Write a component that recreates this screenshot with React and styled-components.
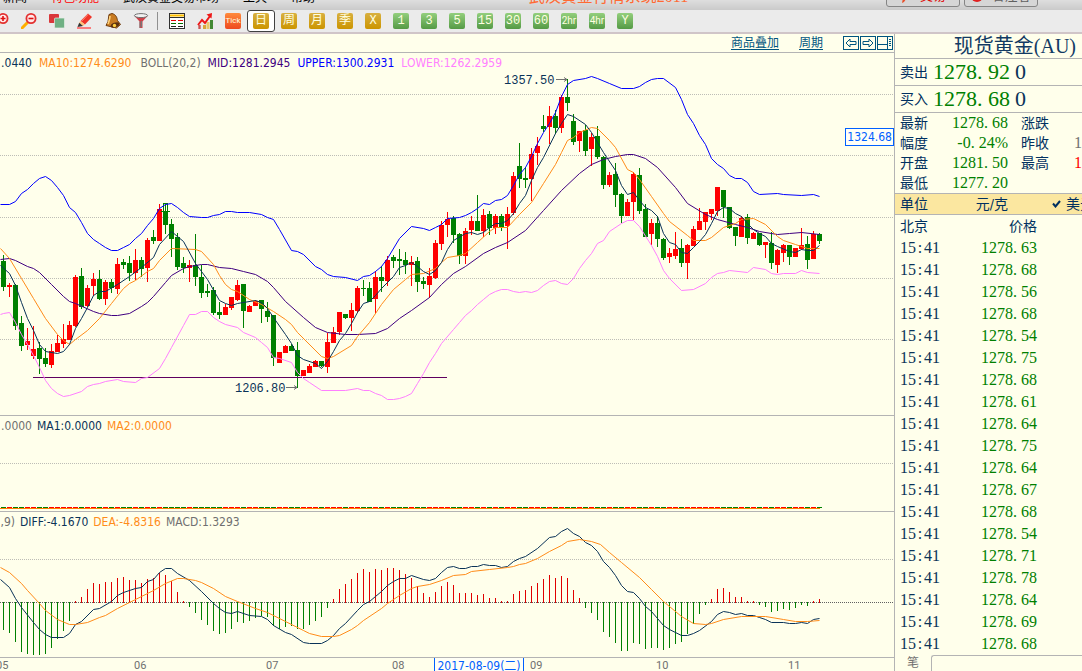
import styled, { createGlobalStyle, css } from "styled-components";

const GlobalStyle = createGlobalStyle`
  * {
    box-sizing: border-box;
  }
  body {
    margin: 0;
    overflow: hidden;
    background: #ffffeb;
    font-family: "DejaVu Sans Condensed", "Noto Sans CJK SC", sans-serif;
    font-size: 12px;
    color: #003060;
  }
`;

const colors = {
  up: "#ff0000",
  down: "#008000",
  navy: "#0a3358",
  orange: "#ff8c1a",
  gray: "#707070",
  purple: "#400080",
  blue: "#0000ff",
  pink: "#ff80ff",
  line: "#b4b4b4",
  grid: "#bdbdb6",
};

const serif = css`
  font-family: "Liberation Serif", "Noto Sans CJK SC", serif;
`;

/* ---------- data ---------- */

const STEP = 6;

// direction, high, top of body, bottom of body, low
const candles = `
G 255 261 287 291|R 283 285 287 297|G 284 285 326 330|G 316 323 346 351|R 328 341 345 350
R 326 349 356 359|G 342 348 359 374|G 348 358 364 367|R 344 351 365 368|R 335 343 352 352
R 324 339 344 348|R 321 325 340 340|R 275 277 326 327|G 268 276 307 309|R 285 288 306 307
R 273 279 286 296|G 270 279 299 300|R 280 282 299 305|G 279 282 288 293|R 258 264 289 294
G 259 262 265 269|G 256 263 273 281|R 249 260 273 280|G 257 260 269 277|R 238 240 268 282
G 230 237 241 244|R 204 209 241 241|G 204 211 225 234|G 219 224 239 257|G 233 237 267 270
G 257 263 268 273|R 260 265 268 282|G 234 265 277 286|G 265 277 293 298|G 284 291 293 297
G 287 290 313 315|G 302 312 315 319|R 304 307 315 315|R 297 297 308 310|R 280 285 300 301
G 284 284 311 328|R 305 306 312 312|R 300 301 306 306|G 300 300 309 323|G 302 311 317 322
G 315 315 358 366|R 352 352 363 363|R 345 346 353 353|G 344 346 351 351|G 342 350 376 388
R 370 370 376 376|R 364 366 373 373|R 360 361 367 367|G 361 361 366 367|R 333 342 367 373
R 327 332 343 343|R 312 312 332 335|G 314 314 318 319|R 303 310 318 331|R 286 288 311 313
G 280 288 289 296|G 282 288 302 302|R 271 277 299 314|G 266 277 281 292|R 256 260 281 286
G 255 257 261 268|G 249 259 261 275|G 252 260 265 274|R 256 262 265 286|G 257 261 282 292
G 277 281 284 289|R 268 276 285 298|R 240 243 278 279|R 221 225 244 250|R 212 219 225 237
G 216 218 235 243|G 233 234 256 264|R 228 231 256 264|R 216 221 230 235|G 195 221 231 231
R 209 215 231 237|G 211 214 228 235|R 214 216 228 234|G 214 216 228 231|R 207 214 226 249
R 172 176 213 215|G 143 166 179 188|G 167 178 180 188|R 148 154 179 201|R 137 146 153 165
G 115 126 129 132|R 106 116 127 144|G 110 116 128 134|R 95 97 128 133|G 79 97 103 111
G 114 121 142 145|R 131 131 141 152|G 125 130 151 156|R 133 137 149 166|G 126 136 157 159
G 156 157 185 189|R 172 175 185 187|G 163 174 195 207|G 193 194 216 223|R 199 202 216 216
R 172 174 202 220|G 168 175 211 214|G 204 209 237 237|R 219 223 234 245|G 216 223 239 247
G 238 239 258 260|R 248 253 257 263|R 232 249 256 259|G 239 248 263 267|R 244 245 263 279
R 226 229 246 246|R 208 221 230 230|R 212 212 222 230|R 209 209 214 220|R 187 187 211 216
G 190 190 207 218|G 207 207 228 229|G 227 227 236 246|R 216 218 237 237|G 214 217 238 244
R 232 233 239 239|G 233 233 245 246|R 242 242 245 258|G 232 243 263 269|R 249 250 265 273
R 244 245 253 262|G 245 245 257 265|R 248 248 257 257|R 228 245 249 250|G 236 244 260 269
R 231 234 259 259|G 233 234 241 244`
  .trim()
  .split(/[|\n]/)
  .map((row) => {
    const [dir, ...v] = row.split(" ");
    const [high, top, bottom, low] = v.map(Number);
    return { color: dir === "R" ? colors.up : colors.down, high, top, bottom, low };
  });

const upper =
  "0,204 9,204 15,201 21,193 27,189 33,183 39,178 45,176 51,180 57,187 63,195 69,207 75,212 81,222 87,233 93,239 99,243 105,247 111,250 117,250 123,247 129,244 135,238 141,233 147,225 153,218 159,208 165,204 171,203 177,207 183,212 189,216 201,217 207,217 213,215 219,214 225,211 231,211 237,212 249,212 261,214 267,217 273,219 279,229 291,250 297,251 303,254 315,266 321,269 327,274 333,276 345,277 357,280 363,276 369,275 375,271 381,266 387,258 399,238 411,226 423,228 429,230 435,227 441,224 447,218 459,217 465,215 471,212 477,208 483,203 489,204 495,200 501,199 507,195 513,185 519,174 525,167 531,156 537,143 543,132 549,123 555,112 561,96 567,84 573,80 585,78 591,76 597,78 609,83 621,88 633,88 639,86 645,82 651,79 657,78 663,78 675,87 681,99 687,114 693,123 699,135 705,144 711,158 717,164 723,168 729,175 735,178 741,178 747,182 753,191 759,194 777,193 783,194 801,195 813,194 819,196";
const lower =
  "0,314 3,313 9,312 15,322 21,334 27,344 33,355 39,367 45,380 51,388 57,393 63,396 69,395 81,391 87,386 93,384 99,383 105,381 117,379 123,381 135,382 141,378 147,377 159,368 165,358 171,347 183,325 189,314 195,314 201,311 207,311 213,317 219,321 225,324 237,327 243,332 255,337 261,342 267,347 273,357 279,358 291,362 297,372 303,378 309,382 321,390 345,390 357,388 363,390 369,390 375,393 381,395 387,399 393,399 399,398 405,396 411,393 417,383 423,373 429,362 435,353 441,343 453,329 459,322 465,315 471,310 477,304 483,299 489,294 495,291 501,289 507,289 513,291 519,292 525,291 531,292 537,290 543,285 549,281 555,280 561,283 567,284 573,278 579,268 585,260 591,253 597,243 603,240 609,231 621,223 627,220 633,220 639,226 651,245 657,256 663,270 669,278 681,290 693,289 705,283 711,277 717,273 723,272 729,270 747,272 753,267 765,269 771,273 777,274 783,273 795,273 801,270 807,272 819,273";
const mid =
  "0,259 9,258 15,260 27,266 33,268 39,272 51,284 63,296 69,301 75,303 93,311 99,313 111,315 117,315 129,313 141,306 147,302 153,296 165,282 171,275 183,268 189,266 201,264 207,264 219,267 231,268 243,271 255,274 267,281 273,287 285,301 303,317 315,327 327,332 345,334 357,334 375,333 387,328 399,318 411,310 429,297 441,284 453,273 465,266 483,253 495,247 507,242 525,230 543,210 561,190 579,173 591,164 603,159 615,156 627,154 633,154 645,158 657,167 675,187 687,203 705,214 717,219 735,224 747,227 759,231 777,234 789,233 801,232 819,234";
const ma10 =
  "0,248 9,258 21,278 33,298 45,318 57,334 63,340 69,344 75,339 87,330 99,318 111,303 123,288 129,283 135,280 147,271 153,268 159,260 171,248 195,249 201,251 213,264 219,275 225,284 231,289 237,291 249,299 261,304 273,311 285,319 291,324 297,332 321,356 327,358 333,356 351,345 357,336 369,322 381,304 393,289 405,279 411,274 423,273 435,268 441,262 447,257 459,255 465,253 477,242 489,231 495,227 507,227 519,214 531,202 543,183 555,164 561,152 567,140 573,137 579,132 591,127 597,128 609,140 615,147 627,169 633,172 639,179 651,196 663,213 669,221 687,235 693,240 705,240 711,237 723,227 735,223 741,219 753,218 765,224 777,236 783,240 795,244 807,248 819,248";
const ma5 =
  "0,265 9,273 15,285 21,302 27,318 33,330 39,344 45,351 57,353 63,351 69,344 75,328 81,318 87,307 93,295 99,291 105,291 117,284 129,276 141,267 153,257 159,244 171,231 183,241 195,263 207,279 219,300 225,303 231,305 237,303 255,300 261,302 267,308 273,317 285,334 291,343 297,355 303,359 315,363 321,368 327,361 333,351 339,340 345,333 351,323 357,312 363,303 369,301 375,295 381,288 393,276 399,267 405,265 411,262 417,266 423,271 429,274 435,270 441,262 447,249 453,240 465,233 471,232 477,234 483,232 489,227 495,223 501,223 507,220 513,213 519,203 525,195 531,180 537,167 543,157 555,133 561,123 567,114 573,116 585,124 591,132 597,142 603,152 615,170 621,185 627,194 633,192 639,200 645,207 651,210 657,216 663,233 669,242 675,244 681,252 687,253 693,247 699,241 705,234 711,223 717,211 723,207 729,208 735,213 741,216 747,223 753,229 759,233 765,236 771,243 777,246 789,251 795,252 801,249 807,250 813,250 819,245";
const diff =
  "0,579 9,587 15,598 21,607 33,622 39,629 45,634 51,637 63,637 69,633 75,624 81,621 93,609 99,608 111,601 117,595 123,592 135,588 141,587 147,581 153,579 159,572 165,568 171,568 177,573 189,580 201,591 213,603 219,608 225,612 231,613 237,611 249,615 261,616 267,619 273,625 285,632 291,634 303,642 309,643 321,643 327,640 333,635 339,628 345,623 357,610 363,604 369,601 375,596 381,591 387,585 393,581 399,578 405,578 411,575 423,579 429,580 435,578 441,572 447,567 453,566 459,568 465,568 471,566 477,566 483,564 489,565 495,565 501,567 507,566 513,561 519,558 525,556 537,548 549,537 555,536 561,531 567,528 573,533 579,536 585,542 591,545 597,551 603,561 609,567 615,575 621,585 627,591 633,592 639,598 645,606 651,611 663,625 669,629 681,635 687,635 693,633 699,630 711,621 717,614 723,611 729,612 735,614 741,613 747,615 753,615 759,617 765,619 771,622 783,622 789,623 795,623 801,622 807,623 813,619 819,618";
const dea =
  "0,567 9,572 21,583 27,590 39,603 45,610 57,619 69,624 75,624 87,622 99,617 105,615 117,608 129,602 141,596 153,590 165,583 177,578 183,578 195,580 201,582 213,588 225,596 237,601 255,608 267,612 285,621 303,630 309,633 321,636 333,636 339,635 351,629 357,625 363,620 381,608 387,603 393,599 399,595 411,588 417,586 429,584 441,580 453,575 465,574 471,571 489,569 507,567 513,566 519,564 525,563 537,558 549,551 561,545 567,541 579,539 591,541 600,544 609,552 621,562 639,577 651,589 663,601 681,616 693,623 705,624 711,623 723,619 741,616 765,616 783,619 795,621 807,621 819,620";

const ZERO = 602;
const macd = [
  629, 632, 641, 651, 653, 654, 654, 653, 647, 638, 630, 620, 601, 597, 589, 583, 584, 582, 582, 578, 577, 580, 580,
  583, 579, 578, 573, 575, 581, 592, 601, 606, 612, 619, 624, 630, 633, 632, 628, 621, 622, 620, 617, 615, 616, 625,
  628, 626, 625, 628, 628, 624, 620, 616, 607, 599, 589, 584, 579, 573, 569, 572, 569, 570, 568, 568, 570, 574, 578,
  586, 593, 597, 592, 586, 582, 585, 593, 593, 593, 595, 594, 598, 598, 601, 601, 594, 591, 590, 586, 583, 579, 575,
  578, 576, 578, 590, 598, 607, 612, 619, 631, 636, 642, 650, 650, 642, 643, 648, 647, 647, 649, 647, 643, 641, 633,
  623, 613, 604, 599, 589, 588, 592, 597, 597, 601, 601, 604, 606, 611, 610, 608, 609, 607, 604, 605, 601, 599,
];

const months = [
  ["05", -4],
  ["06", 134],
  ["07", 266],
  ["08", 392],
  ["09", 530],
  ["10", 656],
  ["11", 788],
];

const ticks = [
  "1278.63", "1278.68", "1278.56", "1278.68", "1278.54", "1278.75", "1278.68", "1278.61", "1278.64", "1278.75",
  "1278.64", "1278.67", "1278.68", "1278.54", "1278.71", "1278.78", "1278.64", "1278.69", "1278.68",
];

/* ---------- window chrome ---------- */

const Window = styled.div`
  height: 100vh;
  display: flex;
  flex-direction: column;
  overflow: hidden;
`;

const TitleBar = styled.header`
  height: 10px;
  flex: none;
  display: flex;
  align-items: flex-end;
  justify-content: space-between;
  padding: 0 44px 0 3px;
  overflow: hidden;
  background: linear-gradient(#dedede, #cacaca);
`;

const Menu = styled.nav`
  flex: none;
  display: flex;
  gap: 24px;
  padding-bottom: 4px;
`;

const MenuItem = styled.a`
  color: ${(props) => (props.$hot ? "#ff0000" : "#000000")};
  font-size: 12px;
  line-height: 16px;
  text-decoration: none;
  white-space: nowrap;
`;

const AppTitle = styled.span`
  flex: 1;
  padding: 0 0 3px 16px;
  color: #ff6a33;
  font-size: 16px;
  line-height: 20px;
  text-align: center;
  white-space: nowrap;
  ${serif}
`;

const TitleButtons = styled.div`
  display: flex;
  gap: 4px;
  padding-bottom: 3px;
`;

const TitleButton = styled.button`
  width: 74px;
  height: 22px;
  display: flex;
  align-items: center;
  justify-content: center;
  gap: 8px;
  padding: 0;
  border: 1px solid #858585;
  border-radius: 3px;
  background: #d6d6d6;
  color: ${(props) => props.$color};
  font-family: inherit;
  font-size: 13px;
  line-height: 16px;
`;

const ToolBar = styled.div`
  height: 24px;
  flex: none;
  display: flex;
  align-items: flex-start;
  border-bottom: 2px solid #d0c5c8;
  background: #ebebeb;
`;

const Tools = styled.div`
  display: flex;
  margin-left: -13px;
`;

const Tool = styled.button`
  width: 28px;
  height: 22px;
  display: flex;
  align-items: center;
  justify-content: center;
  padding: 0;
  border: 1px solid ${(props) => (props.$active ? "#404040" : "transparent")};
  border-radius: 3px;
  background: ${(props) => (props.$active ? "#ffffff" : "none")};
`;

const ToolDivider = styled.div`
  width: 6px;
  height: 18px;
  margin: 2px 0 0 2px;
  border-left: 1px solid #909090;
`;

const badgeColors = {
  gold: "linear-gradient(#d8b040, #cc9500)",
  green: "linear-gradient(#93cf7d, #559a45)",
  tick: "linear-gradient(#ff8a3c, #ee4a20)",
};

const Badge = styled.span`
  width: 16px;
  height: 16px;
  border-radius: 2px;
  background: ${(props) => badgeColors[props.$kind]};
  color: #ffffe0;
  font-family: ${(props) => (props.$size ? "Roboto" : '"Liberation Mono", "Noto Sans CJK SC"')}, sans-serif;
  font-size: ${(props) => props.$size || 12}px;
  line-height: 16px;
  text-align: center;
  overflow: hidden;
`;

/* ---------- left side: charts ---------- */

const Main = styled.main`
  flex: 1;
  min-height: 0;
  display: flex;
`;

const Charts = styled.section`
  flex: 1;
  min-width: 0;
  display: flex;
  flex-direction: column;
  border-right: 1px solid ${colors.line};
`;

const ChartHeader = styled.div`
  height: 19px;
  flex: none;
  display: flex;
  align-items: center;
  justify-content: flex-end;
  gap: 20px;
  padding-right: 1px;
  border-bottom: 1px solid ${colors.line};
`;

const HeaderLink = styled.a`
  color: #00557f;
  font-size: 12px;
  line-height: 16px;
  text-decoration: underline;
  text-underline-offset: 2px;
`;

const NavButtons = styled.div`
  display: flex;
  gap: 1px;
`;

const NavButton = styled.button`
  width: 16px;
  height: 14px;
  padding: 0;
  border: 1px solid #00557f;
  background: none;
  display: flex;
`;

const Panel = styled.div`
  position: relative;
  height: ${(props) => props.$height}px;
  flex: none;
  border-bottom: 1px solid ${colors.line};
`;

const Plot = styled.svg`
  display: block;
  width: 100%;
  height: 100%;
`;

const Legend = styled.div`
  position: absolute;
  top: 2px;
  left: 0;
  display: flex;
  gap: ${(props) => props.$gap || 5}px;
  line-height: 16px;
  white-space: nowrap;
`;

const LegendItem = styled.span`
  color: ${(props) => props.$color};
  ${(props) => props.$indent && "padding-left: 2px;"}
`;

// the first entry is scrolled out past the left edge
const LegendLead = styled(LegendItem)`
  width: ${(props) => props.$width}px;
  display: flex;
  justify-content: flex-end;
  overflow: hidden;
`;

const PriceTag = styled.div`
  position: absolute;
  top: 75px;
  right: 0;
  padding: 0 1px;
  border: 1px solid #0060ff;
  background: #fffff6;
  color: #0060ff;
  line-height: 16px;
`;

const Axis = styled.div`
  position: relative;
  flex: 1;
  overflow: hidden;
`;

const DateTag = styled.div`
  position: absolute;
  top: -1px;
  left: 434px;
  width: 90px;
  border: 1px solid #0060ff;
  background: #fffff6;
  color: #0060ff;
  line-height: 16px;
  text-align: center;
  white-space: nowrap;
`;

function GridLine({ y, color = colors.grid }) {
  return <line x1="0" x2="100%" y1={y + 0.5} y2={y + 0.5} stroke={color} strokeDasharray="1 1" shapeRendering="crispEdges" />;
}

function Curve({ points, color }) {
  return <polyline points={points} transform="translate(0.5 0.5)" fill="none" stroke={color} strokeWidth="1" />;
}

function PricePlot() {
  return (
    <Plot>
      <g transform="translate(0 -53)">
        {[94, 155, 217, 278, 339].map((y) => (
          <GridLine key={y} y={y} />
        ))}
        <g shapeRendering="crispEdges">
          {candles.map((c, i) => (
            <g key={i} fill={c.color}>
              <rect x={i * STEP + 3} y={c.high} width="1" height={c.low - c.high} />
              <rect x={i * STEP + 1} y={c.top} width="5" height={c.bottom - c.top} />
            </g>
          ))}
          <path d="M163 203.5h5M163.5 203v8M167.5 203v8M161 211.5h9" stroke={colors.down} fill="none" />
          <rect x="33" y="377" width="414" height="1" fill="#600060" />
        </g>
        <Curve points={upper} color={colors.blue} />
        <Curve points={mid} color={colors.purple} />
        <Curve points={lower} color={colors.pink} />
        <Curve points={ma10} color={colors.orange} />
        <Curve points={ma5} color={colors.navy} />
        <g fill="none" stroke={colors.gray}>
          <path d="M556 79.5h11M564 77.5l3 2-3 2" />
          <path d="M286 387.5h11M294 385.5l3 2-3 2" />
        </g>
        <g fill={colors.navy} fontFamily="Liberation Mono, monospace" fontSize="12">
          <text x="504" y="84">1357.50</text>
          <text x="235" y="392">1206.80</text>
        </g>
      </g>
    </Plot>
  );
}

function VolumePlot() {
  return (
    <Plot>
      <g transform="translate(0 -416)" shapeRendering="crispEdges">
        <GridLine y={463} />
        {candles.map((c, i) => (
          <rect key={i} x={i * STEP + 1} y="507" width="5" height="1" fill={c.color} />
        ))}
        <rect x="0" y="508" width="820" height="1" fill="#ff8000" />
      </g>
    </Plot>
  );
}

function MacdPlot() {
  return (
    <Plot>
      <g transform="translate(0 -512)">
        <GridLine y={559} />
        <GridLine y={ZERO} color="#606060" />
        <g shapeRendering="crispEdges">
          {macd.map((y, i) => (
            <rect
              key={i}
              x={i * STEP + 3}
              y={Math.min(y, ZERO)}
              width="1"
              height={Math.abs(y - ZERO) + 1}
              fill={y < ZERO ? "#e00000" : colors.down}
            />
          ))}
        </g>
        <Curve points={diff} color={colors.navy} />
        <Curve points={dea} color={colors.orange} />
      </g>
    </Plot>
  );
}

/* ---------- right side: quotes ---------- */

const Quotes = styled.aside`
  width: 187px;
  flex: none;
  display: flex;
  flex-direction: column;
  overflow: hidden;
  white-space: nowrap;
`;

const Symbol = styled.h1`
  margin: 0;
  height: 25px;
  flex: none;
  padding-right: 6px;
  border-bottom: 1px solid ${colors.line};
  color: #123a63;
  font-size: 20px;
  font-weight: 400;
  line-height: 24px;
  text-align: right;
  ${serif}
`;

const DealRow = styled.div`
  height: 27px;
  flex: none;
  display: flex;
  align-items: center;
  gap: 5px;
  padding-left: 5px;
  border-bottom: 1px solid ${colors.line};
`;

const Label = styled.span`
  font-size: 14px;
  line-height: 20px;
`;

const Price = styled.span`
  color: ${(props) => props.$color};
  font-size: ${(props) => props.$size || 16}px;
  line-height: 20px;
  ${serif}
`;

// punctuation takes the same half-em cell as a digit
const Cell = styled.span`
  display: inline-block;
  width: 0.5em;
  text-align: ${(props) => (props.$center ? "center" : "left")};
`;

const Stats = styled.div`
  flex: none;
  display: grid;
  grid-template-columns: 42px 66px 53px auto;
  grid-auto-rows: 20px;
  align-items: center;
  padding-left: 5px;
`;

const StatValue = styled(Price)`
  justify-self: end;
`;

const StatLabel = styled(Label)`
  padding-left: 13px;
`;

const StatRest = styled(Price)`
  padding-left: 13px;
`;

const UnitRow = styled.div`
  height: 22px;
  flex: none;
  display: grid;
  grid-template-columns: 42px 66px 53px auto;
  align-items: center;
  padding-left: 5px;
  border: solid ${colors.line};
  border-width: 1px 0;
  background: #fbe7a0;
`;

const Unit = styled(Label)`
  justify-self: end;
  ${(props) => props.$start && "justify-self: start; padding-left: 5px;"}
`;

const CheckMark = styled.svg`
  justify-self: end;
`;

const TickTable = styled.table`
  width: 142px;
  border-collapse: collapse;

  th,
  td {
    height: 22px;
    padding: 0 0 0 5px;
    font-size: 14px;
    font-weight: 400;
    line-height: 20px;
    text-align: left;
  }
  th:last-child,
  td:last-child {
    padding: 0;
    text-align: right;
  }
`;

const Tabs = styled.div`
  flex: 1;
  display: flex;
  color: ${colors.gray};
`;

const Tab = styled.button`
  width: 36px;
  padding: 0;
  border: 0;
  background: none;
  color: inherit;
  font-family: inherit;
  font-size: 12px;
  line-height: 16px;
  align-self: flex-start;
`;

const TabRest = styled.div`
  flex: 1;
  border: solid ${colors.line};
  border-width: 1px 0 0 1px;
  border-top-left-radius: 3px;
`;

function Digits({ children }) {
  return children.split(/([.:])/).map((part, i) =>
    part === "." || part === ":" ? (
      <Cell key={i} $center={part === ":"}>
        {part}
      </Cell>
    ) : (
      part
    )
  );
}

/* ---------- toolbar icons ---------- */

function Icon({ children }) {
  return (
    <svg width="16" height="16" viewBox="0 0 16 16" fill="none">
      {children}
    </svg>
  );
}

function Magnifier({ plus }) {
  return (
    <Icon>
      <path d="M1 15l5-5" stroke="#ffae00" strokeWidth="3" strokeLinecap="round" />
      <circle cx="10" cy="5.5" r="4.6" fill="#ffe9e9" stroke="#e33030" strokeWidth="1.8" />
      <path d={plus ? "M7.5 5.5h5M10 3v5" : "M7.5 5.5h5"} stroke="#e01010" strokeWidth="1.6" />
    </Icon>
  );
}

function Layers() {
  return (
    <Icon>
      <rect x="0" y="1" width="10" height="9" rx="1" fill="#d9373a" />
      <rect x="5.5" y="5" width="10" height="10" rx="1" fill="#6fb084" stroke="#e6efe6" strokeWidth=".7" />
    </Icon>
  );
}

function Pencil() {
  return (
    <Icon>
      <path d="M0 15h14" stroke="#ff5050" strokeWidth="1.4" />
      <path d="M11 .5l4 3.5-7 7.5-4.5-3.5z" fill="#f03428" />
      <path d="M3.5 8L8 11.5l-2 1.5-4-3z" fill="#ffc27a" />
      <path d="M2.2 9.8L6 13l-5.5 1z" fill="#333" />
      <path d="M11 1.5L4.8 8" stroke="#ff9480" />
    </Icon>
  );
}

function Bell() {
  return (
    <Icon>
      <path d="M4 1.5L7 .5c4 1 5 4 5.500 7l3 4-4 3.500L1 12.500l2-4z" fill="#c87b22" stroke="#6e3c10" />
      <path d="M5 3c0 3-1 5-2 8" stroke="#ffd27a" strokeWidth="1.6" />
      <ellipse cx="10" cy="12" rx="4.500" ry="2.300" fill="#5c3010" transform="rotate(-20 10 12)" />
      <circle cx="9.500" cy="12.500" r="1.700" fill="#ffcf40" />
    </Icon>
  );
}

function Funnel() {
  return (
    <Icon>
      <path d="M1.500 3L6.500 8.500V15h3V8.500L14.500 3z" fill="#d04048" />
      <path d="M7 8.500V15M8.500 8V14" stroke="#777" />
      <ellipse cx="8" cy="2.600" rx="6.600" ry="2" fill="#f1f1f1" stroke="#707070" />
    </Icon>
  );
}

function TableIcon() {
  return (
    <Icon>
      <rect x=".5" y=".5" width="15" height="15" fill="#fff" stroke="#303030" />
      <path d="M1 2.500h14" stroke="#ffc000" strokeWidth="2" />
      <path d="M1 4.500h14" stroke="#303030" />
      <path d="M2 7.500h5M9 7.500h5" stroke="#e00000" />
      <path d="M2 10.500h5M9 10.500h5" stroke="#007000" />
      <path d="M2 13.500h5M9 13.500h5" stroke="#202020" />
    </Icon>
  );
}

function TrendIcon() {
  return (
    <Icon>
      <path d="M2 12v4M3 12v4" stroke="#c02020" />
      <rect x="6" y="12" width="3" height="4" fill="#d9a63a" />
      <rect x="9.500" y="9" width="3" height="7" fill="#e8c86a" />
      <rect x="13" y="7" width="3" height="9" fill="#448a35" />
      <path d="M1 12l4-5 3 3 5-7" stroke="#ee1818" strokeWidth="2" />
      <path d="M9.500 1.500L15 0l-.5 5.500z" fill="#ee1818" />
    </Icon>
  );
}

const tools = [
  { name: "放大", icon: <Magnifier plus /> },
  { name: "缩小", icon: <Magnifier /> },
  { name: "叠加", icon: <Layers /> },
  { name: "画线", icon: <Pencil /> },
  { name: "预警", icon: <Bell /> },
  { name: "过滤", icon: <Funnel /> },
];

const viewTools = [
  { name: "报价", icon: <TableIcon /> },
  { name: "走势", icon: <TrendIcon /> },
];

// label, badge colour, smaller font for the wide labels
const periods = [
  ["Tick", "tick", 8],
  ["日", "gold"],
  ["周", "gold"],
  ["月", "gold"],
  ["季", "gold"],
  ["X", "gold"],
  ["1", "green"],
  ["3", "green"],
  ["5", "green"],
  ["15", "green"],
  ["30", "green"],
  ["60", "green"],
  ["2hr", "green", 10],
  ["4hr", "green", 10],
  ["Y", "green"],
];

function App() {
  return (
    <Window>
      <GlobalStyle />
      <TitleBar>
        <Menu>
          <MenuItem href="#">新闻</MenuItem>
          <MenuItem href="#" $hot>特色功能</MenuItem>
          <MenuItem href="#">武汉黄金交易市场</MenuItem>
          <MenuItem href="#">工具</MenuItem>
          <MenuItem href="#">帮助</MenuItem>
        </Menu>
        <AppTitle>武汉黄金行情系统2011</AppTitle>
        <TitleButtons>
          <TitleButton $color="#e00000">
            <svg width="12" height="14" viewBox="0 0 12 14">
              <path d="M8 0l3 3-7 10-2 1 1-5z" fill="#e8502a" />
            </svg>
            交易
          </TitleButton>
          <TitleButton $color="#606060">
            <svg width="12" height="14" viewBox="0 0 12 14">
              <circle cx="6" cy="7" r="6" fill="#e02020" />
              <path d="M2 10l4-2 4 2" stroke="#fff" fill="none" />
            </svg>
            看注者
          </TitleButton>
        </TitleButtons>
      </TitleBar>

      <ToolBar>
        <Tools>
          {tools.map((t) => (
            <Tool key={t.name} aria-label={t.name}>{t.icon}</Tool>
          ))}
          <ToolDivider />
          {viewTools.map((t) => (
            <Tool key={t.name} aria-label={t.name}>{t.icon}</Tool>
          ))}
          {periods.map(([text, kind, size]) => (
            <Tool key={text} $active={text === "日"}>
              <Badge $kind={kind} $size={size}>{text}</Badge>
            </Tool>
          ))}
        </Tools>
      </ToolBar>

      <Main>
        <Charts>
          <ChartHeader>
            <HeaderLink href="#">商品叠加</HeaderLink>
            <HeaderLink href="#">周期</HeaderLink>
            <NavButtons>
              <NavButton aria-label="左移">
                <svg width="14" height="12" fill="none" stroke="#00557f">
                  <path d="M2 6l4-4v2.500h6v3H6V10z" />
                </svg>
              </NavButton>
              <NavButton aria-label="右移">
                <svg width="14" height="12" fill="none" stroke="#00557f">
                  <path d="M12 6L8 2v2.500H2v3h6V10z" />
                </svg>
              </NavButton>
              <NavButton aria-label="布局">
                <svg width="14" height="12" fill="none" stroke="#00557f">
                  <path d="M9.500 0v12M0 7.500h9M11 2.500h2M11 4.500h2M11 6.500h2M11 8.500h2" />
                </svg>
              </NavButton>
            </NavButtons>
          </ChartHeader>

          <Panel $height={363}>
            <PricePlot />
            <Legend $gap={7}>
              <LegendLead $color={colors.navy} $width={32}>.0440</LegendLead>
              <LegendItem $color={colors.orange}>MA10:1274.6290</LegendItem>
              <LegendItem $color={colors.gray} $indent>BOLL(20,2)</LegendItem>
              <LegendItem $color={colors.purple}>MID:1281.2945</LegendItem>
              <LegendItem $color={colors.blue}>UPPER:1300.2931</LegendItem>
              <LegendItem $color={colors.pink}>LOWER:1262.2959</LegendItem>
            </Legend>
            <PriceTag>1324.68</PriceTag>
          </Panel>

          <Panel $height={96}>
            <VolumePlot />
            <Legend>
              <LegendLead $color={colors.gray} $width={32}>.0000</LegendLead>
              <LegendItem $color={colors.navy}>MA1:0.0000</LegendItem>
              <LegendItem $color={colors.orange}>MA2:0.0000</LegendItem>
            </Legend>
          </Panel>

          <Panel $height={146}>
            <MacdPlot />
            <Legend>
              <LegendLead $color={colors.gray} $width={15}>,9)</LegendLead>
              <LegendItem $color={colors.navy}>DIFF:-4.1670</LegendItem>
              <LegendItem $color={colors.orange}>DEA:-4.8316</LegendItem>
              <LegendItem $color={colors.gray}>MACD:1.3293</LegendItem>
            </Legend>
          </Panel>

          <Axis>
            <Plot fill={colors.gray} fontSize="11" fontFamily="Roboto, sans-serif">
              {months.map(([text, x]) => (
                <text key={text} x={x} y="11">{text}</text>
              ))}
            </Plot>
            <DateTag>2017-08-09(二)</DateTag>
          </Axis>
        </Charts>

        <Quotes>
          <Symbol>现货黄金(AU)</Symbol>
          <DealRow>
            <Label>卖出</Label>
            <Price $color={colors.down} $size={22}><Digits>1278.92</Digits></Price>
            <Price $color={colors.navy} $size={22}>0</Price>
          </DealRow>
          <DealRow>
            <Label>买入</Label>
            <Price $color={colors.down} $size={22}><Digits>1278.68</Digits></Price>
            <Price $color={colors.navy} $size={22}>0</Price>
          </DealRow>
          <Stats>
            <Label>最新</Label>
            <StatValue $color={colors.down}><Digits>1278.68</Digits></StatValue>
            <StatLabel>涨跌</StatLabel>
            <span />
            <Label>幅度</Label>
            <StatValue $color={colors.down}><Digits>-0.24%</Digits></StatValue>
            <StatLabel>昨收</StatLabel>
            <StatRest $color={colors.gray}>1</StatRest>
            <Label>开盘</Label>
            <StatValue $color={colors.down}><Digits>1281.50</Digits></StatValue>
            <StatLabel>最高</StatLabel>
            <StatRest $color={colors.up}>1</StatRest>
            <Label>最低</Label>
            <StatValue $color={colors.down}><Digits>1277.20</Digits></StatValue>
          </Stats>
          <UnitRow>
            <Label>单位</Label>
            <Unit>元/克</Unit>
            <CheckMark width="9" height="8" viewBox="0 0 9 8">
              <path d="M1 3.500l2.500 3L8 1" fill="none" stroke="#003060" strokeWidth="2" />
            </CheckMark>
            <Unit $start>美元</Unit>
          </UnitRow>
          <TickTable>
            <thead>
              <tr>
                <th>北京</th>
                <th>价格</th>
              </tr>
            </thead>
            <tbody>
              {ticks.map((value, i) => (
                <tr key={i}>
                  <td><Price $color={colors.navy}><Digits>15:41</Digits></Price></td>
                  <td><Price $color={colors.down}><Digits>{value}</Digits></Price></td>
                </tr>
              ))}
            </tbody>
          </TickTable>
          <Tabs>
            <Tab>笔</Tab>
            <TabRest />
          </Tabs>
        </Quotes>
      </Main>
    </Window>
  );
}

export default App;
